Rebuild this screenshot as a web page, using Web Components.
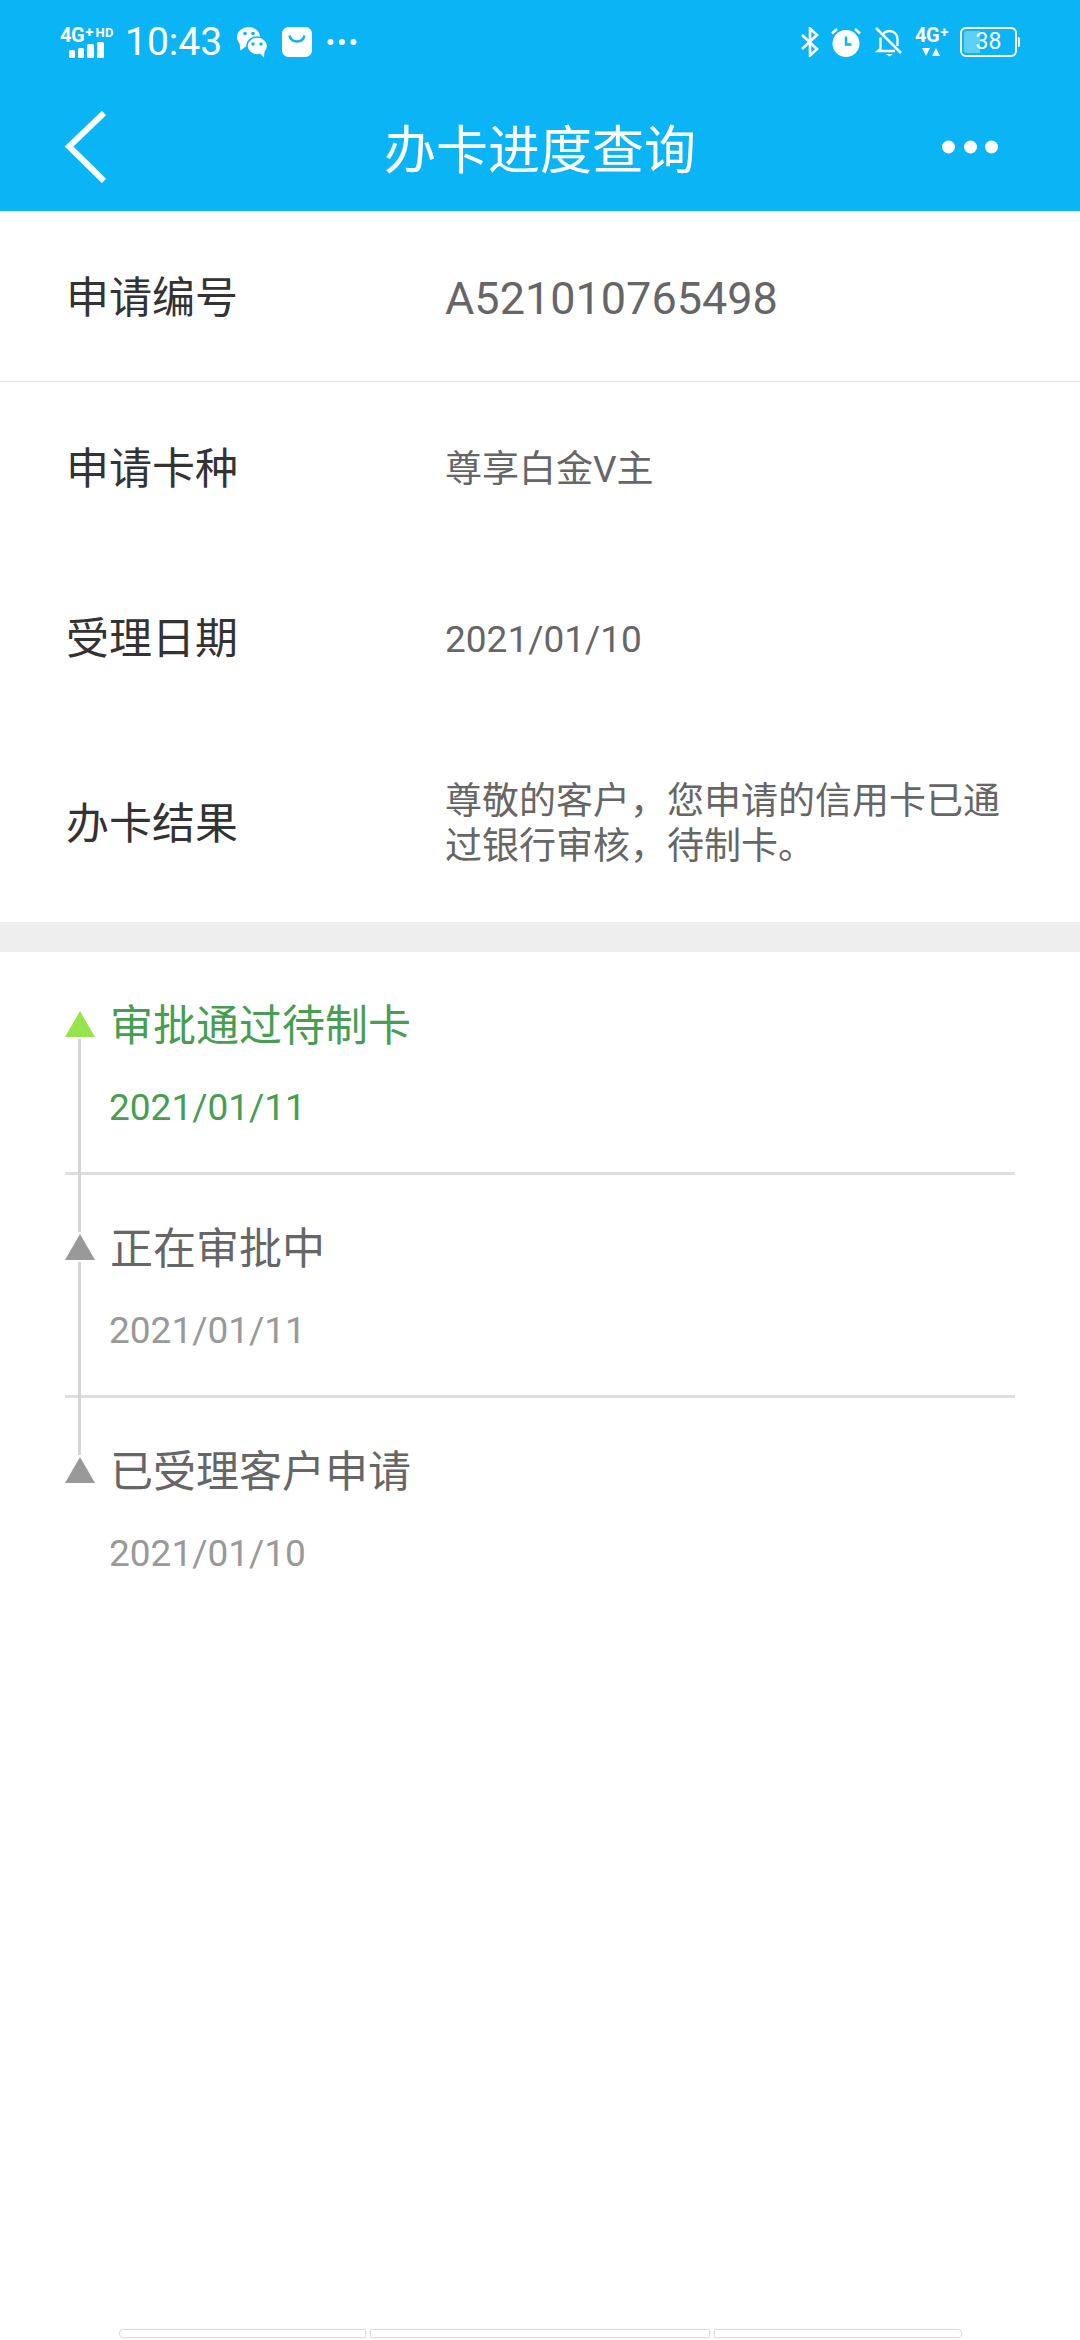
<!DOCTYPE html>
<html lang="zh">
<head>
<meta charset="utf-8">
<title>办卡进度查询</title>
<style>
  html, body { margin: 0; padding: 0; background: #fff; }
  body { font-family: Roboto, "Noto Sans CJK SC", sans-serif; }
</style>
</head>
<body>
<progress-page>
  <status-bar slot="top"></status-bar>
  <app-header slot="top" title="办卡进度查询"></app-header>

  <info-row slot="info" label="申请编号" size="big" height="170">A521010765498</info-row>
  <info-row slot="info" label="申请卡种" line height="171">尊享白金V主</info-row>
  <info-row slot="info" label="受理日期" height="170">2021/01/10</info-row>
  <info-row slot="info" label="办卡结果" height="200">尊敬的客户，您申请的信用卡已通过银行审核，待制卡。</info-row>

  <timeline-item slot="steps" state="active" title="审批通过待制卡" date="2021/01/11"></timeline-item>
  <timeline-item slot="steps" title="正在审批中" date="2021/01/11"></timeline-item>
  <timeline-item slot="steps" last title="已受理客户申请" date="2021/01/10"></timeline-item>

  <nav-hint slot="bottom"></nav-hint>
</progress-page>

<script>
class ProgressPage extends HTMLElement {
  constructor() {
    super()
    const shadow = this.attachShadow({ mode: 'open' })
    shadow.innerHTML = `
      <style>
        :host { display: flex; flex-direction: column; width: 1080px; height: 2340px; overflow: hidden; background: #fff; }
        .info { display: flex; flex-direction: column; }
        .band { height: 30px; background: #eeeeee; flex: none; }
        .steps { display: flex; flex-direction: column; padding: 0 65px; }
        .spacer { flex: 1; }
      </style>
      <slot name="top"></slot>
      <div class="info"><slot name="info"></slot></div>
      <div class="band"></div>
      <div class="steps"><slot name="steps"></slot></div>
      <div class="spacer"></div>
      <slot name="bottom"></slot>
    `
  }
}

class StatusBar extends HTMLElement {
  constructor() {
    super()
    const shadow = this.attachShadow({ mode: 'open' })
    shadow.innerHTML = `
      <style>
        :host { display: flex; align-items: center; justify-content: space-between; height: 84px; padding: 0 60px; box-sizing: border-box; background: #0bb5f5; color: #fff; font-family: Roboto, sans-serif; }
        .side { display: flex; align-items: center; }
        .net { display: flex; flex-direction: column; width: 56px; height: 30px; flex: none; }
        .tech { display: flex; align-items: flex-start; height: 16px; font-weight: 700; white-space: nowrap; }
        .g { font-size: 20px; line-height: 16px; letter-spacing: -.4px; }
        .plus { font-size: 15px; line-height: 10px; margin-left: 1px; }
        .hd { font-size: 13px; line-height: 11px; margin-left: 2px; letter-spacing: .3px; }
        .time { font-size: 39px; line-height: 44px; width: 100px; margin-left: 9px; white-space: nowrap; flex: none; }
        svg { display: block; flex: none; }
      </style>
      <div class="side">
        <div class="net">
          <div class="tech"><span class="g">4G</span><span class="plus">+</span><span class="hd">HD</span></div>
          <svg width="36" height="16" viewBox="0 0 36 16" style="margin-left:9px;margin-top:-1px"><rect x="0" y="8" width="6" height="8" rx="1.500" fill="#fff"/><rect x="9" y="6" width="6" height="10" rx="1.500" fill="#fff"/><rect x="18" y="2" width="7" height="14" rx="1.500" fill="#fff"/><rect x="28" y="0" width="7" height="16" rx="1.500" fill="#fff"/></svg>
        </div>
        <div class="time">10:43</div>
        <svg width="31" height="31" viewBox="0 0 31 31" style="margin-left:12px">
          <ellipse cx="11.500" cy="10" rx="11.500" ry="10" fill="#fff"/>
          <path d="M2.500 16 3.500 23.500 10 18.500z" fill="#fff"/>
          <circle cx="8" cy="6.500" r="1.800" fill="#0bb5f5"/><circle cx="16" cy="6.500" r="1.800" fill="#0bb5f5"/>
          <ellipse cx="20.300" cy="19" rx="10.300" ry="9" fill="#fff" stroke="#0bb5f5" stroke-width="1.500"/>
          <path d="M23 26.500 27 30.500 27.500 24z" fill="#fff"/>
          <circle cx="16" cy="17" r="1.700" fill="#0bb5f5"/><circle cx="24" cy="17" r="1.700" fill="#0bb5f5"/>
        </svg>
        <svg width="30" height="30" viewBox="0 0 30 30" style="margin-left:14px">
          <rect width="30" height="30" rx="6.500" fill="#fff"/>
          <path d="M7.500 8.500c1 4.200 4 6 7.500 6s6.500-1.800 7.500-6" fill="none" stroke="#0bb5f5" stroke-width="2.500"/>
        </svg>
        <svg width="30" height="8" viewBox="0 0 30 8" style="margin-left:15px"><circle cx="3.500" cy="4" r="3" fill="#fff"/><circle cx="15" cy="4" r="3" fill="#fff"/><circle cx="26.500" cy="4" r="3" fill="#fff"/></svg>
      </div>
      <div class="side">
        <svg width="18" height="30" viewBox="0 0 18 30"><path d="M1 8l15 14-7 6.500V1.500L16 8 1 22" fill="none" stroke="#fff" stroke-width="2.600"/></svg>
        <svg width="30" height="30" viewBox="0 0 30 30" style="margin-left:12px">
          <circle cx="15" cy="16.500" r="13.500" fill="#fff"/>
          <path d="M15 9.500v8h5.500" fill="none" stroke="#0bb5f5" stroke-width="2.500"/>
          <path d="M1 6.500 6 2M29 6.500 24 2" stroke="#fff" stroke-width="2.500"/>
        </svg>
        <svg width="28" height="30" viewBox="0 0 28 30" style="margin-left:14px">
          <path d="M8 7.500c1.500-2.500 4-3.500 6.500-3.500 5 0 8 4 8 8v7M5.500 10.500V22L3 24h17" fill="none" stroke="#fff" stroke-width="2.300"/>
          <path d="M1 1l25 25" stroke="#fff" stroke-width="2.500"/>
          <path d="M11 27h7l-3.500 2.500z" fill="#fff"/>
        </svg>
        <div class="net" style="width:31px;margin-left:12px">
          <div class="tech"><span class="g">4G</span><span class="plus">+</span></div>
          <svg width="20" height="10" viewBox="0 0 20 10" style="margin:4px 0 0 7px"><path d="M0 1h8l-4 8zM10 9h8l-4-8z" fill="#fff"/></svg>
        </div>
        <battery-icon level="38" style="margin-left:14px"></battery-icon>
      </div>
    `
  }
}

class BatteryIcon extends HTMLElement {
  constructor() {
    super()
    const shadow = this.attachShadow({ mode: 'open' })
    shadow.innerHTML = `
      <style>
        :host { display: flex; align-items: center; }
        .box { position: relative; width: 57px; height: 30px; box-sizing: border-box; border: 2px solid #fff; border-radius: 6px; text-align: center; font: 23px/26px Roboto, sans-serif; color: #fff; }
        .fill { position: absolute; left: 2px; top: 2px; bottom: 2px; width: 16px; background: rgba(255,255,255,.35); border-radius: 3px 0 0 3px; }
        .txt { position: relative; }
        .cap { width: 2px; height: 10px; background: #fff; margin-left: 1px; border-radius: 0 2px 2px 0; }
      </style>
      <div class="box"><div class="fill"></div><span class="txt"></span></div>
      <div class="cap"></div>
    `
    shadow.querySelector('.txt').textContent = this.getAttribute('level')
  }
}

class AppHeader extends HTMLElement {
  constructor() {
    super()
    const shadow = this.attachShadow({ mode: 'open' })
    shadow.innerHTML = `
      <style>
        :host { display: flex; align-items: center; justify-content: space-between; height: 127px; padding: 0 82px 1px 64px; box-sizing: border-box; background: #0bb5f5; color: #fff; position: relative; }
        h1 { margin: 0; font: 400 52px/60px "Noto Sans CJK SC", sans-serif; position: absolute; left: 0; right: 0; text-align: center; }
        svg { display: block; position: relative; }
      </style>
      <svg width="44" height="72" viewBox="0 0 44 72"><path d="M40 2 5 35.500 40 70" fill="none" stroke="#fff" stroke-width="6"/></svg>
      <h1></h1>
      <svg width="56" height="14" viewBox="0 0 56 14"><circle cx="6.500" cy="7" r="6.500" fill="#fff"/><circle cx="28.500" cy="7" r="6.500" fill="#fff"/><circle cx="49.500" cy="7" r="6.500" fill="#fff"/></svg>
    `
    shadow.querySelector('h1').textContent = this.getAttribute('title')
  }
}

class InfoRow extends HTMLElement {
  constructor() {
    super()
    const shadow = this.attachShadow({ mode: 'open' })
    shadow.innerHTML = `
      <style>
        :host { display: flex; align-items: center; box-sizing: border-box; padding: 4px 50px 0 66px; color: #333; font-family: Roboto, "Noto Sans CJK SC", sans-serif; flex: none; }
        :host([line]) { border-top: 1px solid #e4e4e4; }
        .label { width: 379px; flex: none; font-size: 43px; line-height: 50px; }
        .value { flex: 1; color: #666; font-size: 37px; line-height: 45px; }
        :host([size="big"]) .value { font-size: 45px; }
      </style>
      <div class="label"></div>
      <div class="value"><slot></slot></div>
    `
    shadow.querySelector('.label').textContent = this.getAttribute('label')
    this.style.height = this.getAttribute('height') + 'px'
  }
}

class TimelineItem extends HTMLElement {
  constructor() {
    super()
    const shadow = this.attachShadow({ mode: 'open' })
    shadow.innerHTML = `
      <style>
        :host { display: block; position: relative; height: 223px; box-sizing: border-box; padding: 44px 0 0 45px; border-bottom: 3px solid #dedede; font-family: Roboto, "Noto Sans CJK SC", sans-serif; color: #666; }
        :host([last]) { border-bottom: none; }
        :host([state="active"]) { color: #479e52; }
        .title { font-size: 43px; line-height: 60px; }
        .date { font-size: 37px; line-height: 44px; margin: 30px 0 0 -1px; color: #999; }
        :host([state="active"]) .date { color: #479e52; }
        .tri { position: absolute; left: 0; top: 59px; width: 0; height: 0; border-left: 15px solid transparent; border-right: 15px solid transparent; border-bottom: 26px solid #999; }
        :host([state="active"]) .tri { border-bottom-color: #97e34c; }
        .rail { position: absolute; left: 13px; width: 3px; top: 87px; height: 193px; background: #d4d4d4; }
        :host([last]) .rail { display: none; }
      </style>
      <div class="rail"></div>
      <div class="tri"></div>
      <div class="title"></div>
      <div class="date"></div>
    `
    shadow.querySelector('.title').textContent = this.getAttribute('title')
    shadow.querySelector('.date').textContent = this.getAttribute('date')
  }
}

class NavHint extends HTMLElement {
  constructor() {
    super()
    const shadow = this.attachShadow({ mode: 'open' })
    shadow.innerHTML = `
      <style>
        :host { display: flex; gap: 4px; height: 11px; padding: 0 118px 0 119px; }
        div { box-sizing: border-box; height: 9px; border: 1px solid #dcdcdc; box-shadow: 0 0 2px #eee; }
        .a { flex: 247; border-radius: 5px 1px 1px 5px; }
        .b { flex: 340; border-radius: 1px; }
        .c { flex: 248; border-radius: 1px 5px 5px 1px; }
      </style>
      <div class="a"></div><div class="b"></div><div class="c"></div>
    `
  }
}

customElements.define('progress-page', ProgressPage)
customElements.define('status-bar', StatusBar)
customElements.define('battery-icon', BatteryIcon)
customElements.define('app-header', AppHeader)
customElements.define('info-row', InfoRow)
customElements.define('timeline-item', TimelineItem)
customElements.define('nav-hint', NavHint)
</script>
</body>
</html>
